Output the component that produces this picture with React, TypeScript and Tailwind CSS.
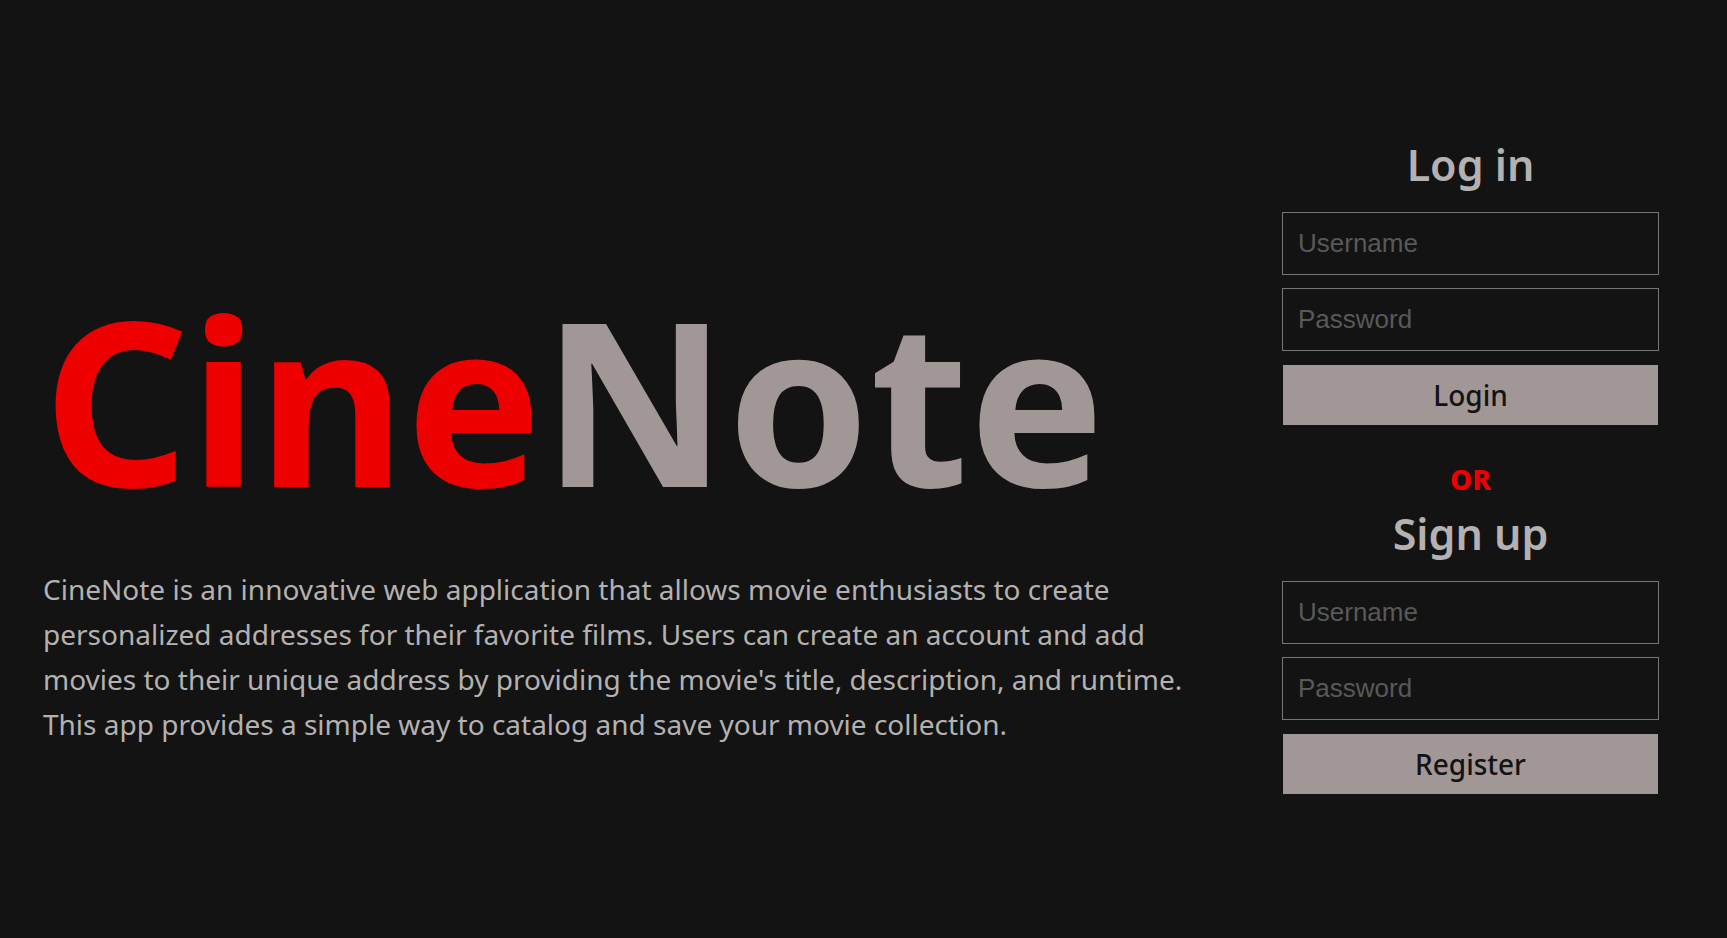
type AuthFormProps = {
  id: string;
  title: string;
  action: string;
};

function AuthForm({ id, title, action }: AuthFormProps) {
  const field =
    "h-[63px] w-full border border-[#7a7474] bg-transparent px-[15px] font-['Liberation_Sans',sans-serif] text-[26px] text-[#b3b1b1] outline-none placeholder:text-[#595959] placeholder:opacity-100";
  return (
    <form className="flex flex-col gap-[13px]" onSubmit={(e) => e.preventDefault()}>
      <h2 className="pb-1 text-center text-[43px] font-semibold leading-[60px]">{title}</h2>
      <input
        id={`${id}-username`}
        className={field}
        type="text"
        placeholder="Username"
        aria-label="Username"
        autoComplete="username"
      />
      <input
        id={`${id}-password`}
        className={field}
        type="password"
        placeholder="Password"
        aria-label="Password"
      />
      <button
        type="submit"
        className="h-[62px] w-full border border-[#131313] bg-[#a29797] text-[28px] font-medium text-[#131313]"
      >
        {action}
      </button>
    </form>
  );
}

export default function App() {
  return (
    <main className="flex min-h-screen items-center justify-between gap-16 bg-[#131313] pl-[43px] pr-[68px] font-['Noto_Sans',sans-serif] text-[#b3b1b1]">
      <section className="min-w-0 flex-1">
        <h1 className="mb-4 whitespace-nowrap pt-14 text-[228px] font-bold leading-[304px] text-[#a29797]">
          <span className="text-[#ee0000]">Cine</span>Note
        </h1>
        <p className="text-[28px] leading-[45px]">
          CineNote is an innovative web application that allows movie enthusiasts to create
          personalized addresses for their favorite films. Users can create an account and add
          movies to their unique address by providing the movie's title, description, and runtime.
          This app provides a simple way to catalog and save your movie collection.
        </p>
      </section>
      <section className="flex w-[377px] shrink-0 flex-col pb-2">
        <AuthForm id="login" title="Log in" action="Login" />
        <p className="pb-1 pt-8 text-center text-[28px] font-extrabold leading-[42px] text-[#ee0000]">OR</p>
        <AuthForm id="signup" title="Sign up" action="Register" />
      </section>
    </main>
  );
}
